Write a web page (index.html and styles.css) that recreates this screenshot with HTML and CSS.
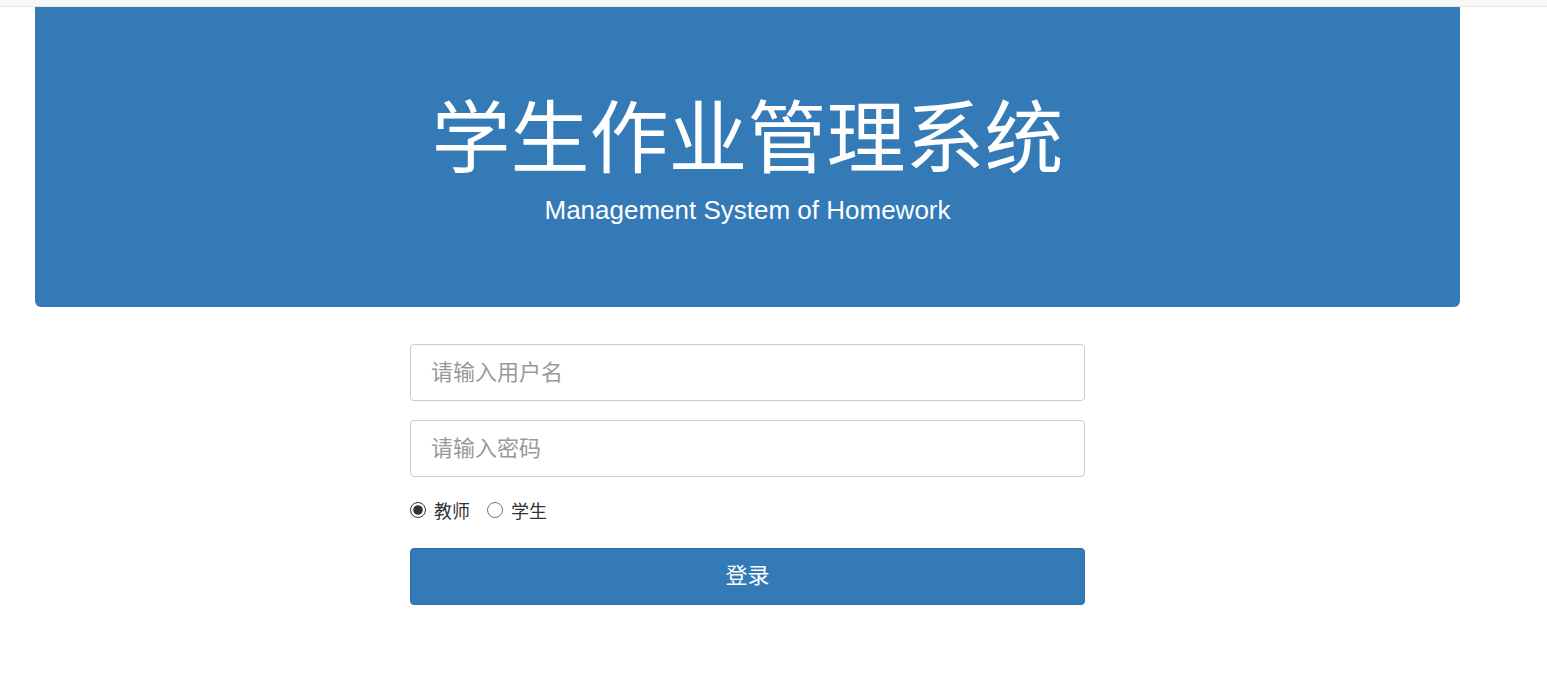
FILE: index.html
```html
<!DOCTYPE html>
<html lang="zh-CN">
<head>
<meta charset="utf-8">
<title>学生作业管理系统</title>
<link rel="stylesheet" href="styles.css">
</head>
<body>
<div class="topbar"></div>
<div class="page">
  <div class="jumbotron">
    <h1 class="title">学生作业管理系统</h1>
    <p class="subtitle">Management System of Homework</p>
  </div>
  <form class="login">
    <input class="field" type="text" placeholder="请输入用户名">
    <input class="field" type="password" placeholder="请输入密码">
    <div class="roles">
      <label class="role"><input type="radio" name="role" checked> 教师</label>
      <label class="role"><input type="radio" name="role"> 学生</label>
    </div>
    <button class="btn" type="button">登录</button>
  </form>
</div>
</body>
</html>
```

FILE: styles.css
```css
* { box-sizing: border-box; }
body {
  margin: 0;
  background: #fff;
  font-family: "Liberation Sans", "Noto Sans CJK SC", sans-serif;
  color: #333;
}
.topbar {
  height: 7px;
  background: #f8f8f8;
  border-bottom: 1px solid #e7e7e7;
}
.page {
  margin-left: 35px;
  width: 1425px;
}
.jumbotron {
  height: 300px;
  background: #337ab7;
  border-radius: 0 0 6px 6px;
  color: #fff;
  display: flex;
  flex-direction: column;
  align-items: center;
  padding-top: 78px;
}
.title {
  margin: 0;
  font-family: "Noto Sans CJK SC", sans-serif;
  font-weight: 400;
  font-size: 79px;
  line-height: 96px;
}
.subtitle {
  margin: 14px 0 0;
  font-size: 26px;
  line-height: 30px;
}
.login {
  width: 675px;
  margin: 37px auto 0;
  display: flex;
  flex-direction: column;
}
.field {
  height: 57px;
  border: 1px solid #ccc;
  border-radius: 4px;
  padding: 0 20px;
  font-family: "Liberation Sans", "Noto Sans CJK SC", sans-serif;
  font-size: 22px;
  color: #555;
  margin-bottom: 19px;
}
.field::placeholder { color: #999; }
.roles {
  display: flex;
  gap: 17px;
  height: 32px;
  align-items: center;
  font-size: 18px;
  color: #333;
  margin-top: -2px;
}
.role {
  display: flex;
  align-items: center;
  gap: 8px;
}
.role input {
  margin: 0;
  width: 16px;
  height: 16px;
  accent-color: #333;
}
.btn {
  margin-top: 22px;
  height: 57px;
  background: #337ab7;
  border: 1px solid #2e6da4;
  border-radius: 4px;
  color: #fff;
  font-family: "Liberation Sans", "Noto Sans CJK SC", sans-serif;
  font-size: 22px;
  line-height: 1;
  padding-bottom: 3px;
}
```
